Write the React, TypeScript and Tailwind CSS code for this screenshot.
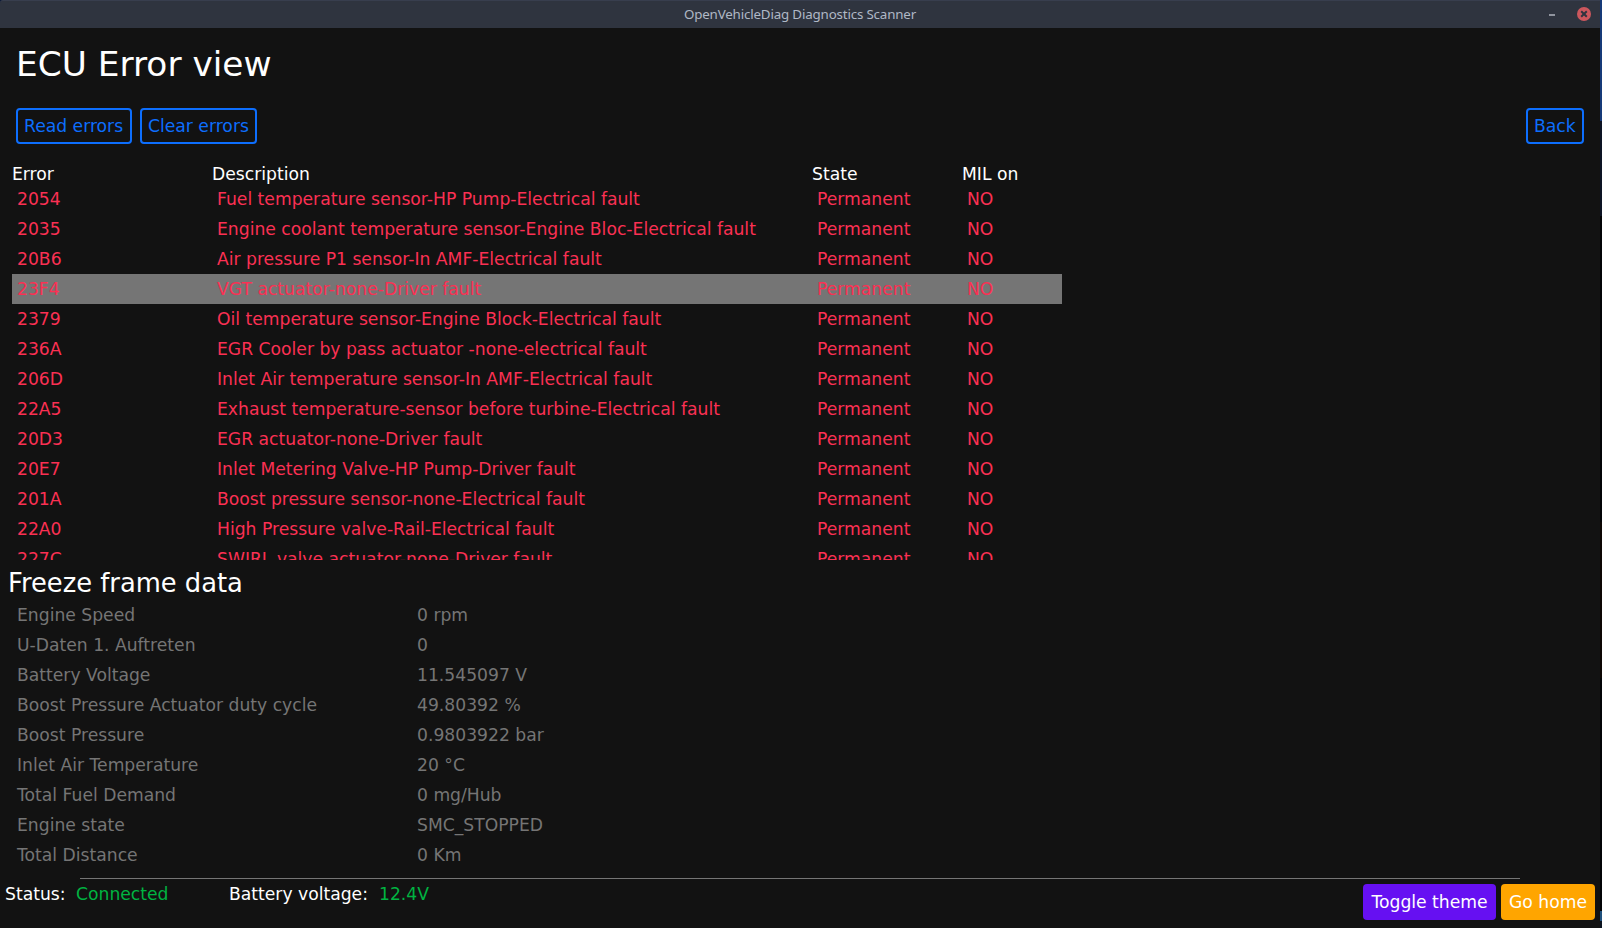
import React from "react";

const errors: [string, string][] = [
  ["2054", "Fuel temperature sensor-HP Pump-Electrical fault"],
  ["2035", "Engine coolant temperature sensor-Engine Bloc-Electrical fault"],
  ["20B6", "Air pressure P1 sensor-In AMF-Electrical fault"],
  ["23F4", "VGT actuator-none-Driver fault"],
  ["2379", "Oil temperature sensor-Engine Block-Electrical fault"],
  ["236A", "EGR Cooler by pass actuator -none-electrical fault"],
  ["206D", "Inlet Air temperature sensor-In AMF-Electrical fault"],
  ["22A5", "Exhaust temperature-sensor before turbine-Electrical fault"],
  ["20D3", "EGR actuator-none-Driver fault"],
  ["20E7", "Inlet Metering Valve-HP Pump-Driver fault"],
  ["201A", "Boost pressure sensor-none-Electrical fault"],
  ["22A0", "High Pressure valve-Rail-Electrical fault"],
  ["227C", "SWIRL valve actuator-none-Driver fault"],
];

const freezeFrame: [string, string][] = [
  ["Engine Speed", "0 rpm"],
  ["U-Daten 1. Auftreten", "0"],
  ["Battery Voltage", "11.545097 V"],
  ["Boost Pressure Actuator duty cycle", "49.80392 %"],
  ["Boost Pressure", "0.9803922 bar"],
  ["Inlet Air Temperature", "20 °C"],
  ["Total Fuel Demand", "0 mg/Hub"],
  ["Engine state", "SMC_STOPPED"],
  ["Total Distance", "0 Km"],
];

const columns = "grid grid-cols-[200px_600px_150px_100px]";

function OutlineButton({ width, children }: { width: string; children: React.ReactNode }) {
  return (
    <button
      className={`${width} h-9 whitespace-nowrap rounded-[4px] border-2 border-[#0d6efd] pl-1.5 text-left leading-5 text-[#0d6efd]`}
    >
      {children}
    </button>
  );
}

function TitleBar() {
  return (
    <header className="flex h-7 shrink-0 items-center rounded-tl-[3px] border-t border-[#383e4e] bg-[#2f343f]">
      <span className="w-[60px]" />
      <div className="flex flex-1 justify-center">
        <span className="-mt-[2px] whitespace-nowrap font-['Noto_Sans',sans-serif] text-[13.33px] leading-5 tracking-[-0.16px] text-[#afb8c6]">
          OpenVehicleDiag Diagnostics Scanner
        </span>
      </div>
      <div className="flex w-[60px] items-center justify-end gap-[22px] pr-[9px]">
        <span className="h-0.5 w-1.5 bg-[#90949e]" />
        <svg className="-mt-px" width="14" height="14" viewBox="0 0 14 14">
          <circle cx="7" cy="7" r="7" fill="#cc575d" />
          <path d="M4.2 4.2 9.8 9.8M9.8 4.2 4.2 9.8" stroke="#2f343f" strokeWidth="2" />
        </svg>
      </div>
    </header>
  );
}

export default function App() {
  return (
    <div className="flex h-[928px] w-[1602px] overflow-hidden bg-[#0b1836] font-['DejaVu_Sans',sans-serif] text-[17.18px] leading-5 text-white">
      <div className="flex w-[1600px] flex-col">
        <TitleBar />
        <main className="flex min-h-0 flex-1 flex-col bg-[#121212]">
          <h1 className="px-4 pt-4 text-[34.36px] leading-10">ECU Error view</h1>
          <div className="mt-6 flex gap-2 px-4">
            <OutlineButton width="w-[116px]">Read errors</OutlineButton>
            <OutlineButton width="w-[117px]">Clear errors</OutlineButton>
            <div className="flex-1" />
            <OutlineButton width="w-[58px]">Back</OutlineButton>
          </div>
          <div className={`${columns} mt-5 pl-3`}>
            <span>Error</span>
            <span>Description</span>
            <span>State</span>
            <span>MIL on</span>
          </div>
          <div className="h-[376px] shrink-0 overflow-hidden pl-3 text-[#fb3053]">
            {errors.map(([code, description]) => (
              <div
                key={code}
                className={`${columns} h-[30px] w-[1050px] items-center pl-[5px] ${code === "23F4" ? "bg-[#757575]" : ""}`}
              >
                <span>{code}</span>
                <span>{description}</span>
                <span>Permanent</span>
                <span>NO</span>
              </div>
            ))}
          </div>
          <h2 className="mt-2 pl-2 text-[25.77px] leading-[30px]">Freeze frame data</h2>
          <div className="pl-[17px] pt-0.5 text-[#757575]">
            {freezeFrame.map(([name, value]) => (
              <div key={name} className="grid h-[30px] grid-cols-[400px_1fr] items-center">
                <span>{name}</span>
                <span>{value}</span>
              </div>
            ))}
          </div>
          <div className="mx-20 mt-[8px] h-px bg-[#757575]" />
          <footer className="flex items-start px-[5px] pt-[5px]">
            <span className="w-[71px]">Status:</span>
            <span className="w-[153px] text-[#00b341]">Connected</span>
            <span className="w-[150px]">Battery voltage:</span>
            <span className="flex-1 text-[#00b341]">12.4V</span>
            <div className="flex gap-[5px]">
              <button className="h-9 w-[133px] whitespace-nowrap rounded-[4px] bg-[#6610f2]">Toggle theme</button>
              <button className="h-9 w-[94px] whitespace-nowrap rounded-[4px] bg-[#ffa500]">Go home</button>
            </div>
          </footer>
        </main>
      </div>
      <div className="flex w-0.5 flex-col">
        <div className="h-[121px] bg-[#173a78]" />
        <div className="h-[95px] bg-[#0d1424]" />
        <div className="h-[306px] bg-[#030406]" />
        <div className="h-[156px] bg-[#0d0704]" />
        <div className="flex-1 bg-[#030406]" />
        <div className="h-[10px] bg-[#20507c]" />
        <div className="h-[7px] bg-[#0c1420]" />
      </div>
    </div>
  );
}
